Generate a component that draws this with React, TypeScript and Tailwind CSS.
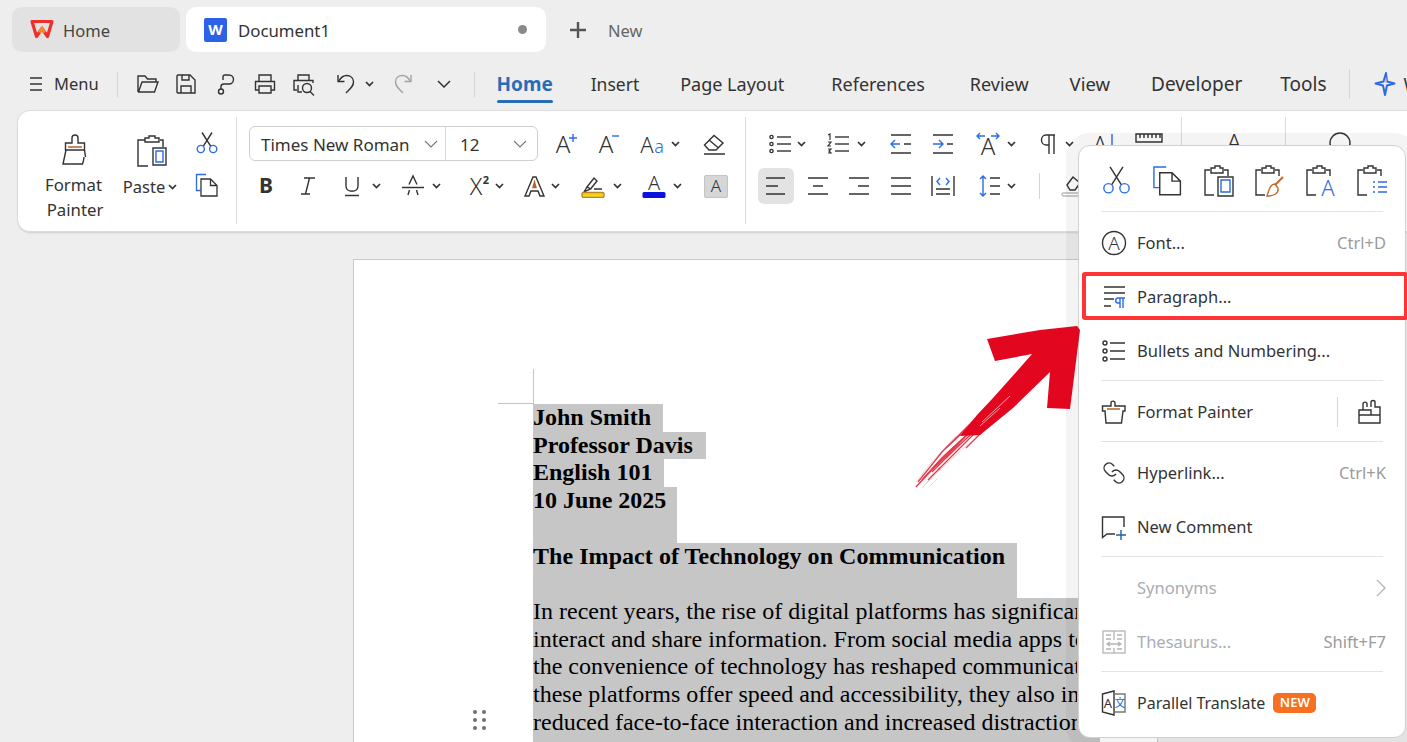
import type { ReactNode } from 'react'

const DARK = '#333333'
const BLUE = '#2b6be6'

const Ico = ({ w = 24, h = 24, className = '', children }: { w?: number; h?: number; className?: string; children: ReactNode }) => (
  <svg width={w} height={h} viewBox={`0 0 ${w} ${h}`} fill="none" stroke={DARK} strokeWidth={1.4} className={`shrink-0 ${className}`}>
    {children}
  </svg>
)

const Glyph = ({ x, y, size = 22, fill = DARK, weight = 300, family = 'Noto Sans', children }: { x: number; y: number; size?: number; fill?: string; weight?: number; family?: string; children: ReactNode }) => (
  <text x={x} y={y} textAnchor="middle" fontSize={size} fontWeight={weight} fontFamily={family} fill={fill} stroke="none">{children}</text>
)

const Chev = ({ className = '', color = DARK }: { className?: string; color?: string }) => (
  <svg width="9" height="6" viewBox="0 0 9 6" fill="none" stroke={color} strokeWidth={1.7} className={`shrink-0 ${className}`}>
    <path d="M1 1l3.5 3.5L8 1" />
  </svg>
)

const Thin = ({ className = '' }: { className?: string }) => (
  <svg width="14" height="8" viewBox="0 0 14 8" fill="none" stroke="#777" strokeWidth={1.1} className={`shrink-0 ${className}`}>
    <path d="M1 1l6 6 6-6" />
  </svg>
)

const Scissors = ({ s = 24 }: { s?: number }) => (
  <svg width={s} height={s} viewBox="0 0 24 24" fill="none" stroke={DARK} strokeWidth={s > 24 ? 1.1 : 1.4} className="shrink-0">
    <path d="M8.2 15.3L17 1.5M15.8 15.3L7 1.5" />
    <circle cx="5.8" cy="18" r="3.6" stroke={BLUE} />
    <circle cx="18.2" cy="18" r="3.6" stroke={BLUE} />
  </svg>
)

const CopyIco = ({ s = 24 }: { s?: number }) => (
  <svg width={s} height={s} viewBox="0 0 24 24" fill="none" stroke={DARK} strokeWidth={s > 24 ? 1.1 : 1.3} className="shrink-0">
    <path d="M11 1.5H1.5V17.5H5.5" stroke={BLUE} />
    <path d="M6 6H15.5L22 12.5V23H6ZM15.5 6V12.5H22" />
  </svg>
)

const Clip = ({ children }: { children?: ReactNode }) => (
  <svg width="32" height="32" viewBox="0 0 32 32" fill="none" stroke={DARK} strokeWidth={1.4} className="shrink-0">
    <path d="M7 5H2V30H11M21 5H25V11" />
    <path d="M8 8V3H12V1H17V3H20V8Z" />
    {children}
  </svg>
)

const BrushIco = () => (
  <Ico w={34} h={34}>
    <path d="M14 10V5a3 3 0 016 0V10h6.5v7H7.5v-7Z" />
    <path d="M8 17L5 31H24.5C25.5 28 26 26 26 24M26.5 17l1 7" />
    <path d="M10 14h14" stroke="#b5622a" strokeWidth={1.5} />
  </Ico>
)

const Lines = ({ ys, x1 = 4, x2 = 20 }: { ys: number[]; x1?: number; x2?: number }) => (
  <>{ys.map(y => <path key={y} d={`M${x1} ${y}H${x2}`} />)}</>
)

const Sep = ({ className = '' }: { className?: string }) => <div className={`w-px bg-[#d5d5d5] shrink-0 ${className}`} />

const Divider = () => <div className="mx-[22px] mt-[2px] mb-[4px] h-px bg-[#e3e3e3]" />

const Tab = ({ children, className = '' }: { children: ReactNode; className?: string }) => (
  <span className={`shrink-0 ${className}`}>{children}</span>
)

const Row = ({ icon, label, right, dim }: { icon?: ReactNode; label: ReactNode; right?: ReactNode; dim?: boolean }) => (
  <div className="flex h-[54px] items-center pl-[22px] pr-[19px]">
    <div className="flex w-[26px] shrink-0 justify-center">{icon}</div>
    <div className={`ml-[10px] flex items-center text-[16.5px] ${dim ? 'text-[#a9adb3]' : 'text-[#333]'}`}>{label}</div>
    <div className="ml-auto flex items-center text-[16.5px] text-[#9b9b9b]">{right}</div>
  </div>
)

const MenuCell = ({ children }: { children: ReactNode }) => (
  <div className="flex w-[51px] shrink-0 justify-center">{children}</div>
)

// brush tail of the arrow, from the solid shaft down to the tip
const redStreaks = [
  'M68 94L32 130L8 160', 'M72 98L38 132L14 156', 'M62 108L34 134L6 165', 'M70 104L44 128L22 150',
  'M58 112L30 138L12 158', 'M66 110L42 134L28 148', 'M54 116L26 144', 'M64 100L36 126',
  'M50 122L36 136', 'M74 108L56 126', 'M30 146L18 158',
]
const paleStreaks = [
  'M46 114L20 142L6 160', 'M58 122L34 144L16 162', 'M38 138L24 152L12 166', 'M28 156L20 164',
]

const body = [
  'In recent years, the rise of digital platforms has significantly changed how people',
  'interact and share information. From social media apps to instant messaging tools,',
  'the convenience of technology has reshaped communication across the world. While',
  'these platforms offer speed and accessibility, they also introduce new challenges such as',
  'reduced face-to-face interaction and increased distractions.',
]

export default function App() {
  return (
    <div className="relative h-[742px] w-[1407px] overflow-hidden bg-[#eeeeee] font-['Noto_Sans',sans-serif] text-[#333]">
      {/* tabs */}
      <div className="flex h-[62px] items-start pt-[7px] pl-[12px]">
        <div className="flex h-[45px] w-[168px] items-center rounded-[10px] bg-[#e2e2e2] pl-[18px]">
          <svg width="24" height="22" viewBox="0 0 24 22" fill="none" strokeWidth={3.2} className="shrink-0">
            <path d="M2 2.5H22L17.5 17.5L12 9.5L6.5 17.5Z" stroke="#ef2f2a" strokeLinejoin="round" />
            <path d="M9.5 13.5L12 9.5L14.5 13.5" stroke="#f58a2a" />
          </svg>
          <span className="ml-[9px] mt-[3px] text-[16.5px] text-[#444]">Home</span>
        </div>
        <div className="ml-[6px] flex h-[45px] w-[360px] items-center rounded-[10px] bg-white pl-[18px]">
          <div className="flex h-[24px] w-[23px] items-center justify-center rounded-[2px] bg-[#2b62e8] text-[15px] font-bold text-white">W</div>
          <span className="ml-[11px] mt-[3px] text-[16.8px] text-[#333]">Document1</span>
          <div className="ml-auto mr-[19px] h-[9px] w-[9px] rounded-full bg-[#8a8a8a]" />
        </div>
        <div className="flex h-[45px] items-center">
          <svg width="18" height="18" viewBox="0 0 18 18" stroke="#555" strokeWidth={2.4} className="ml-[23px]">
            <path d="M9 1V17M1 9H17" />
          </svg>
          <span className="ml-[21px] mt-[3px] text-[16.5px] text-[#666]">New</span>
        </div>
      </div>

      {/* menu bar */}
      <div className="flex h-[44px] items-center pl-[29px] whitespace-nowrap">
        <svg width="14" height="16" viewBox="0 0 14 16" stroke={DARK} strokeWidth={1.4} className="shrink-0">
          <path d="M1 2H13M1 8H13M1 14H13" />
        </svg>
        <span className="ml-[11px] text-[16.5px]">Menu</span>
        <Sep className="ml-[18px] h-[25px]" />
        <Ico className="ml-[18px]">
          <path d="M2 20V4H9L11.5 7H20V10M2 20H18.5L22 10H6L2.5 20" />
        </Ico>
        <Ico className="ml-[14px]">
          <path d="M4 3H16L21 8V21H4C3 21 3 20 3 20V4C3 4 3 3 4 3Z" />
          <path d="M8 3V8H15V3M7 21V14H17V21" />
        </Ico>
        <Ico className="ml-[16px]">
          <path d="M13 3H15A4.5 4.5 0 0 1 15 12H10C8 12 7 13 7 14.5V17" />
          <path d="M13 3H11C9.5 3 9 4 9 5V8" />
          <circle cx="7" cy="19.5" r="2.5" />
        </Ico>
        <Ico className="ml-[15px]">
          <path d="M6 9V3H18V9M6 18H2.5V9.5H21.5V18H18" />
          <path d="M6 14H18V21H6Z" />
        </Ico>
        <Ico className="ml-[15px]">
          <path d="M6 8V3H17V8M5 18H2V8.5H21V11" />
          <circle cx="15" cy="16" r="4.5" />
          <path d="M18 19.5L22 23.5M6 13V20H10" />
        </Ico>
        <Ico className="ml-[18px]">
          <path d="M4 3V9.5H10.5" />
          <path d="M4.5 9.5C7 5 10 3.5 12.5 3.5C17 3.5 19.5 6.5 19.5 10C19.5 14 17 16 12 21" />
        </Ico>
        <Chev className="ml-[7px]" />
        <Ico className="ml-[17px] opacity-40">
          <path d="M20 3V9.5H13.5" />
          <path d="M19.5 9.5C17 5 14 3.5 11.5 3.5C7 3.5 4.5 6.5 4.5 10C4.5 14 7 16 12 21" />
        </Ico>
        <svg width="14" height="8" viewBox="0 0 14 8" fill="none" stroke={DARK} strokeWidth={1.5} className="ml-[22px] shrink-0">
          <path d="M1 1l6 6 6-6" />
        </svg>
        <Sep className="ml-[23px] h-[25px]" />
        <div className="ml-[22px] flex h-[44px] w-[56px] flex-col items-center justify-end">
          <span className="text-[19px] font-bold leading-[26px] text-[#2a6db5]">Home</span>
          <div className="mt-[3px] mb-[3px] h-[3px] w-[56px] rounded-full bg-[#2a6db5]" />
        </div>
        <Tab className="ml-[38px] text-[17.5px]">Insert</Tab>
        <Tab className="ml-[41px] text-[18px]">Page Layout</Tab>
        <Tab className="ml-[47px] text-[18px]">References</Tab>
        <Tab className="ml-[45px] text-[18px]">Review</Tab>
        <Tab className="ml-[41px] text-[18.5px]">View</Tab>
        <Tab className="ml-[41px] text-[19px]">Developer</Tab>
        <Tab className="ml-[38px] text-[19px]">Tools</Tab>
        <Sep className="ml-[23px] h-[30px]" />
        <svg width="22" height="26" viewBox="0 0 22 26" className="ml-[24px] shrink-0">
          <path d="M12 2L13 10.5L20.5 12.5L13 14.5L11 24L9 14.5L1.5 12.5L9.5 10.5Z" fill="none" stroke={BLUE} strokeWidth={2} strokeLinejoin="round" />
          <path d="M12 5L13 11L11 12Z" fill="#f0a8a0" />
        </svg>
        <span className="ml-[7px] text-[18px]">WPS AI</span>
      </div>

      {/* ribbon */}
      <div className="ml-[18px] mt-[5px] flex h-[120px] w-[1400px] rounded-[12px] bg-white py-[6px] shadow-[0_0_0_1px_#dcdcdc,0_2px_2px_#cfcfcf]">
        {/* clipboard */}
        <div className="flex h-[107px] w-[219px] shrink-0 border-r border-[#dcdcdc]">
          <div className="ml-[23px] flex w-[68px] shrink-0 flex-col items-center pt-[16px]">
            <BrushIco />
            <div className="mt-[5px] text-center text-[16.8px] leading-[25px]"><span className="-ml-[3px] block">Format</span>Painter</div>
          </div>
          <div className="ml-[13px] flex w-[60px] shrink-0 flex-col items-center pt-[17px]">
            <Ico w={34} h={34}>
              <path d="M10 6H3V32H13M25 6H28V13" />
              <path d="M10 8V4H14V2H20V4H24V8Z" />
              <path d="M18 14H31V31H18Z" />
              <path d="M21 17H28V28H21Z" stroke={BLUE} />
            </Ico>
            <div className="-ml-[4px] mt-[8px] flex items-center text-[16.5px] leading-[22px]">Paste<Chev className="ml-[3px]" /></div>
          </div>
          <div className="ml-[13px] flex flex-col items-center pt-[14px]">
            <Scissors />
            <div className="mt-[18px]"><CopyIco /></div>
          </div>
        </div>

        {/* font */}
        <div className="h-[107px] w-[509px] shrink-0 border-r border-[#dcdcdc] pt-[9px]">
          <div className="flex h-[35px] items-center pl-[12px]">
            <div className="flex h-[35px] w-[289px] shrink-0 items-center rounded-[6px] border border-[#cfcfcf] text-[17px]">
              <div className="flex h-full w-[196px] items-center border-r border-[#d8d8d8] pl-[11px]">
                <span className="mt-[2px]">Times New Roman</span>
                <Thin className="ml-auto mr-[7px]" />
              </div>
              <span className="ml-[14px] mt-[2px]">12</span>
              <Thin className="ml-auto mr-[10px]" />
            </div>
            <Ico className="ml-[16px]">
              <Glyph x={9} y={21} size={24}>A</Glyph>
              <path d="M19 2V10M15 6H23" stroke={BLUE} />
            </Ico>
            <Ico className="ml-[18px]">
              <Glyph x={10} y={21} size={24}>A</Glyph>
              <path d="M16 4H23" stroke={BLUE} />
            </Ico>
            <Ico w={28} className="ml-[19px]">
              <Glyph x={8} y={21} size={22}>A</Glyph>
              <Glyph x={20} y={21} size={18} fill={BLUE}>a</Glyph>
            </Ico>
            <Chev className="ml-[4px]" />
            <Ico className="ml-[22px]">
              <path d="M2.5 13L12 3.5L21 11L14 18H7Z" />
              <path d="M7 8L16 15.5M2 22H23" />
            </Ico>
          </div>
          <div className="mt-[7px] flex h-[36px] items-center">
            <Ico className="ml-[17px]"><Glyph x={12} y={19} size={21} weight={700}>B</Glyph></Ico>
            <Ico className="ml-[18px]">
              <path d="M8 4H19M5 20H14M13.5 4L9.5 20" />
            </Ico>
            <Ico className="ml-[20px]">
              <path d="M6 3V12C6 19 18 19 18 12V3M5 21.5H19" />
            </Ico>
            <Chev className="ml-[8px]" />
            <Ico className="ml-[20px]">
              <path d="M1 13.5H23M8 10.5L12 2L16 10.5M8.5 16L7 21M15.5 16L17 21" />
            </Ico>
            <Chev className="ml-[7px]" />
            <Ico className="ml-[25px]">
              <Glyph x={10} y={21} size={23}>X</Glyph>
              <Glyph x={20} y={10} size={11} weight={700}>2</Glyph>
            </Ico>
            <Chev className="ml-[5px]" />
            <Ico className="ml-[18px]">
              <path d="M3 22L11 3H14L22 22H18L16 17H9L7 22Z" />
              <path d="M11 13.5L12.5 8L14 13.5Z" fill="#b5622a" stroke="#b5622a" />
            </Ico>
            <Chev className="ml-[5px]" />
            <Ico className="ml-[21px]">
              <path d="M6 13L13 4L16 7L9.5 15M3 18L6 13L9.5 15ZM13 15H21" />
              <rect x="1" y="18.5" width="22" height="5" rx="1.5" fill="#f7d21c" stroke="#b98728" />
            </Ico>
            <Chev className="ml-[8px]" />
            <Ico className="ml-[20px]">
              <Glyph x={12} y={16} size={20}>A</Glyph>
              <rect x="0.5" y="18" width="23" height="6" rx="1.5" fill="#0a12dd" stroke="none" />
            </Ico>
            <Chev className="ml-[7px]" />
            <div className="ml-[22px] flex h-[23px] w-[24px] items-center justify-center rounded-[2px] border border-[#c4c4c4] bg-[#d6d6d6]">
              <span className="text-[17px] font-light text-[#333]">A</span>
            </div>
          </div>
        </div>

        {/* paragraph */}
        <div className="h-[107px] w-[436px] shrink-0 border-r border-[#dcdcdc] pt-[9px]">
          <div className="flex h-[35px] items-center">
            <Ico className="ml-[22px]">
              <Lines ys={[5, 12, 19]} x1={9} x2={23} />
              <circle cx="3.5" cy="5" r="1.6" /><circle cx="3.5" cy="12" r="1.6" /><circle cx="3.5" cy="19" r="1.6" />
            </Ico>
            <Chev className="ml-[5px]" />
            <Ico className="ml-[20px]">
              <Lines ys={[5, 12, 19]} x1={9} x2={23} />
              <path d="M2 3L4 2V8M2 10H5L2 14H5M2 17H5L3 19L5 21H2" strokeWidth={1.2} />
            </Ico>
            <Chev className="ml-[7px]" />
            <Ico className="ml-[23px]">
              <path d="M2 3H22M2 21H22M15 12H22" />
              <path d="M2 12H11M6 8L2 12L6 16" stroke={BLUE} />
            </Ico>
            <Ico className="ml-[18px]">
              <path d="M2 3H22M2 21H22M16 12H22" />
              <path d="M2 12H12M8 8L12 12L8 16" stroke={BLUE} />
            </Ico>
            <Ico className="ml-[21px]">
              <Glyph x={12} y={23} size={24}>A</Glyph>
              <path d="M1 4H9M4 1L1 4L4 7M15 4H23M20 1L23 4L20 7" stroke={BLUE} />
            </Ico>
            <Chev className="ml-[7px]" />
            <Ico className="ml-[19px]">
              <path d="M14 3V22M19 3V22M20 3H11C5 3 5 13 11 13H14" />
            </Ico>
            <Chev className="ml-[6px]" />
            <Ico className="ml-[16px]">
              <Glyph x={10} y={21} size={23}>A</Glyph>
              <path d="M22 2V23" stroke={BLUE} />
            </Ico>
            <Ico w={28} className="ml-[21px]">
              <path d="M1 2H27V10H1ZM5 2V6M9 2V6M13 2V6M17 2V6M21 2V6M25 2V6" />
            </Ico>
          </div>
          <div className="mt-[7px] flex h-[36px] items-center">
            <div className="ml-[12px] flex h-[36px] w-[36px] items-center justify-center rounded-[6px] bg-[#e3e3e3]">
              <Ico><path d="M2 4H21M2 12H14M2 20H21" /></Ico>
            </div>
            <Ico className="ml-[12px]"><path d="M2 4H22M7 12H17M2 20H22" /></Ico>
            <Ico className="ml-[17px]"><path d="M2 4H22M11 12H22M2 20H22" /></Ico>
            <Ico className="ml-[18px]"><path d="M2 4H22M2 12H22M2 20H22" /></Ico>
            <Ico className="ml-[18px]">
              <path d="M1 2V22M23 2V22M5 15H19M5 20H19" />
              <path d="M9 4L6 7.5L9 11M15 4L18 7.5L15 11" stroke={BLUE} />
            </Ico>
            <Ico className="ml-[23px]">
              <path d="M5 2V22M2 5L5 2L8 5M2 19L5 22L8 19" stroke={BLUE} />
              <path d="M12 4H22M12 12H22M12 20H22" />
            </Ico>
            <Chev className="ml-[5px]" />
            <Sep className="ml-[23px] h-[26px]" />
            <Ico className="ml-[21px]">
              <path d="M6 11L12 3L19 9L14 16H9Z" />
              <rect x="1" y="19" width="22" height="3" rx="1.5" stroke="#bbb" />
            </Ico>
          </div>
        </div>

        {/* styles, hidden by the menu */}
        <div className="flex h-[107px] w-[104px] shrink-0 justify-center border-r border-[#dcdcdc] pt-[12px]">
          <Ico><Glyph x={12} y={22} size={24}>A</Glyph></Ico>
        </div>
        <div className="flex h-[107px] w-[108px] shrink-0 justify-center pt-[14px]">
          <Ico><circle cx="12" cy="12" r="10" /></Ico>
        </div>
      </div>

      {/* document */}
      <div className="relative ml-[353px] mt-[28px] h-[483px] w-[805px] overflow-hidden border-x border-t border-[#c9c9c9] bg-white pt-[109px] font-['Liberation_Serif',serif] text-[24px] leading-[27.7px] text-black whitespace-nowrap">
        <div className="ml-[144px] h-[35px] w-[36px] border-r border-b border-[#c4c4c4]" />
        <div className="ml-[179px]">
          <div className="font-bold">
            <div className="w-[130px] bg-[#c6c6c6]">John Smith</div>
            <div className="w-[173px] bg-[#c6c6c6]">Professor Davis</div>
            <div className="w-[131px] bg-[#c6c6c6]">English 101</div>
            <div className="h-[55.4px] w-[144px] bg-[#c6c6c6]">10 June 2025</div>
            <div className="h-[55.4px] w-[484px] bg-[#c6c6c6] tracking-[0.05px]">The Impact of Technology on Communication</div>
          </div>
          <div className="h-[160px] w-[567px] bg-[#c6c6c6]">
            {body.map(line => <div key={line} className="w-[544px] overflow-hidden">{line}</div>)}
          </div>
        </div>
      </div>

      {/* drag handle */}
      <div className="absolute left-[473px] top-[710px] grid grid-cols-2 gap-x-[5px] gap-y-[4px]">
        {[0, 1, 2, 3, 4, 5].map(i => <div key={i} className="h-[4px] w-[4px] rounded-full bg-[#6f6f6f]" />)}
      </div>

      {/* context menu */}
      <div className="absolute left-[1078px] top-[145px] z-10 h-[593px] w-[328px] rounded-[12px] border border-[#d0d0d0] bg-white shadow-[0_0_0_12px_rgba(0,0,0,0.045)]">
        <div className="flex h-[63px] items-center pl-[12px] pt-[6px]">
          <MenuCell><Scissors s={31} /></MenuCell>
          <MenuCell><CopyIco s={31} /></MenuCell>
          <MenuCell>
            <Clip>
              <path d="M15 12H30V31H15Z" />
              <path d="M18 15H27V27H18Z" stroke={BLUE} />
            </Clip>
          </MenuCell>
          <MenuCell>
            <Clip>
              <path d="M29 12L21 20" stroke="#c06a2a" strokeWidth={2} />
              <path d="M21 19C16 19 15 25 13 31C19 31 25 29 24 23Z" stroke="#c06a2a" />
            </Clip>
          </MenuCell>
          <MenuCell>
            <Clip>
              <Glyph x={23} y={31} size={22} fill={BLUE}>A</Glyph>
            </Clip>
          </MenuCell>
          <MenuCell>
            <Clip>
              <path d="M17 17H19M22 17H31M17 22H19M22 22H31M17 27H19M22 27H31" stroke={BLUE} strokeWidth={1.6} />
            </Clip>
          </MenuCell>
        </div>
        <Divider />
        <Row
          icon={<Ico w={26} h={26}><circle cx="13" cy="13" r="11.5" /><Glyph x={13} y={20} size={19}>A</Glyph></Ico>}
          label="Font..."
          right="Ctrl+D"
        />
        <Row
          icon={
            <Ico w={26} h={26}>
              <path d="M3 3H24M3 9H24M3 15H13M3 22H10" />
              <path d="M19 24V14M22 24V14M24 14H17C14 14 14 19 17 19H19" stroke={BLUE} strokeWidth={1.4} />
            </Ico>
          }
          label="Paragraph..."
        />
        <Row
          icon={
            <Ico w={26} h={26}>
              <path d="M9 5H24M9 13H24M9 21H24" />
              <circle cx="4" cy="5" r="2" /><circle cx="4" cy="13" r="2" /><circle cx="4" cy="21" r="2" />
            </Ico>
          }
          label="Bullets and Numbering..."
        />
        <Divider />
        <Row
          icon={
            <Ico w={26} h={26}>
              <path d="M10 7V4C10 1.5 14 1.5 14 4V7H24V12H22L20.5 24H5L4 12H1.5V7Z" />
              <path d="M6 10H19" stroke="#b5622a" strokeWidth={1.5} />
            </Ico>
          }
          label="Format Painter"
          right={
            <>
              <Sep className="mr-[19px] h-[30px]" />
              <Ico w={26} h={26} className="mr-[3px]">
                <path d="M6 11V5C6 2.5 10 2.5 10 5V8M14 8V3C14 1 18 1 18 3V8H23V16H14V11H2V24H23V16M2 16H14" />
              </Ico>
            </>
          }
        />
        <Divider />
        <Row
          icon={
            <Ico w={26} h={26}>
              <g transform="translate(25 1) scale(-1 1)">
                <path d="M10 13a5 5 0 0 0 7.54.54l3-3a5 5 0 0 0-7.07-7.07l-1.72 1.71" />
                <path d="M14 11a5 5 0 0 0-7.54-.54l-3 3a5 5 0 0 0 7.07 7.07l1.71-1.71" />
              </g>
            </Ico>
          }
          label="Hyperlink..."
          right="Ctrl+K"
        />
        <Row
          icon={
            <Ico w={26} h={26}>
              <path d="M14 20H6L1.5 23.5V3H23V13" />
              <path d="M20 16V26M15 21H25" stroke="#1f5fa8" />
            </Ico>
          }
          label="New Comment"
        />
        <Divider />
        <Row
          dim
          label="Synonyms"
          right={
            <svg width="10" height="18" viewBox="0 0 10 18" fill="none" stroke="#b5b5b5" strokeWidth={1.3}>
              <path d="M1 1L9 9L1 17" />
            </svg>
          }
        />
        <Row
          dim
          icon={
            <svg width="24" height="24" viewBox="0 0 24 24" fill="none" stroke="#b4b4b4" strokeWidth={1.3}>
              <rect x="1" y="1" width="22" height="22" />
              <path d="M4 5H9M4 9H9M15 5H20M15 9H20M4 19H9M15 19H20M5 14H19M8 12L5 14L8 16M16 12L19 14L16 16M12 1V10M12 18V23" />
            </svg>
          }
          label="Thesaurus..."
          right="Shift+F7"
        />
        <Divider />
        <Row
          icon={
            <Ico w={26} h={26}>
              <path d="M1.5 4L13 1V25L1.5 22Z" />
              <path d="M14 4H24V22H14" stroke="#777" />
              <Glyph x={7} y={18} size={13} weight={400}>A</Glyph>
              <Glyph x={19} y={17} size={11} fill={BLUE} family="Noto Sans CJK JP" weight={400}>文</Glyph>
            </Ico>
          }
          label={
            <>
              <span className="text-[16px]">Parallel Translate</span>
              <span className="ml-[8px] flex h-[20px] w-[43px] items-center justify-center rounded-[5px] bg-[#f6701f] text-[13px] font-semibold text-white">NEW</span>
            </>
          }
        />

        {/* annotation */}
        <div className="absolute left-[3px] top-[126px] h-[48px] w-[326px] rounded-[3px] border-[4px] border-[#ff3434]" />
      </div>

      {/* red arrow */}
      <svg width="175" height="170" viewBox="0 0 175 170" className="absolute left-[910px] top-[322px] z-20">
        <g stroke="#c9c9c9" strokeWidth={1} opacity={0.6} fill="none">
          {paleStreaks.map(d => <path key={d} d={d} />)}
        </g>
        <g stroke="#e2071f" strokeWidth={1.3} opacity={0.8} fill="none">
          {redStreaks.map(d => <path key={d} d={d} />)}
        </g>
        <path
          d="M77 17L85 39L122 32L108 48L83 76L67 93L50 114L70 113L103 86L140 50L137 86L160 87L170 8L167 4L130 8Z"
          fill="#e2071f"
        />
        <path d="M100 74L72 100M90 86L70 104" stroke="#f5c6ca" strokeWidth={0.8} />
      </svg>
    </div>
  )
}
